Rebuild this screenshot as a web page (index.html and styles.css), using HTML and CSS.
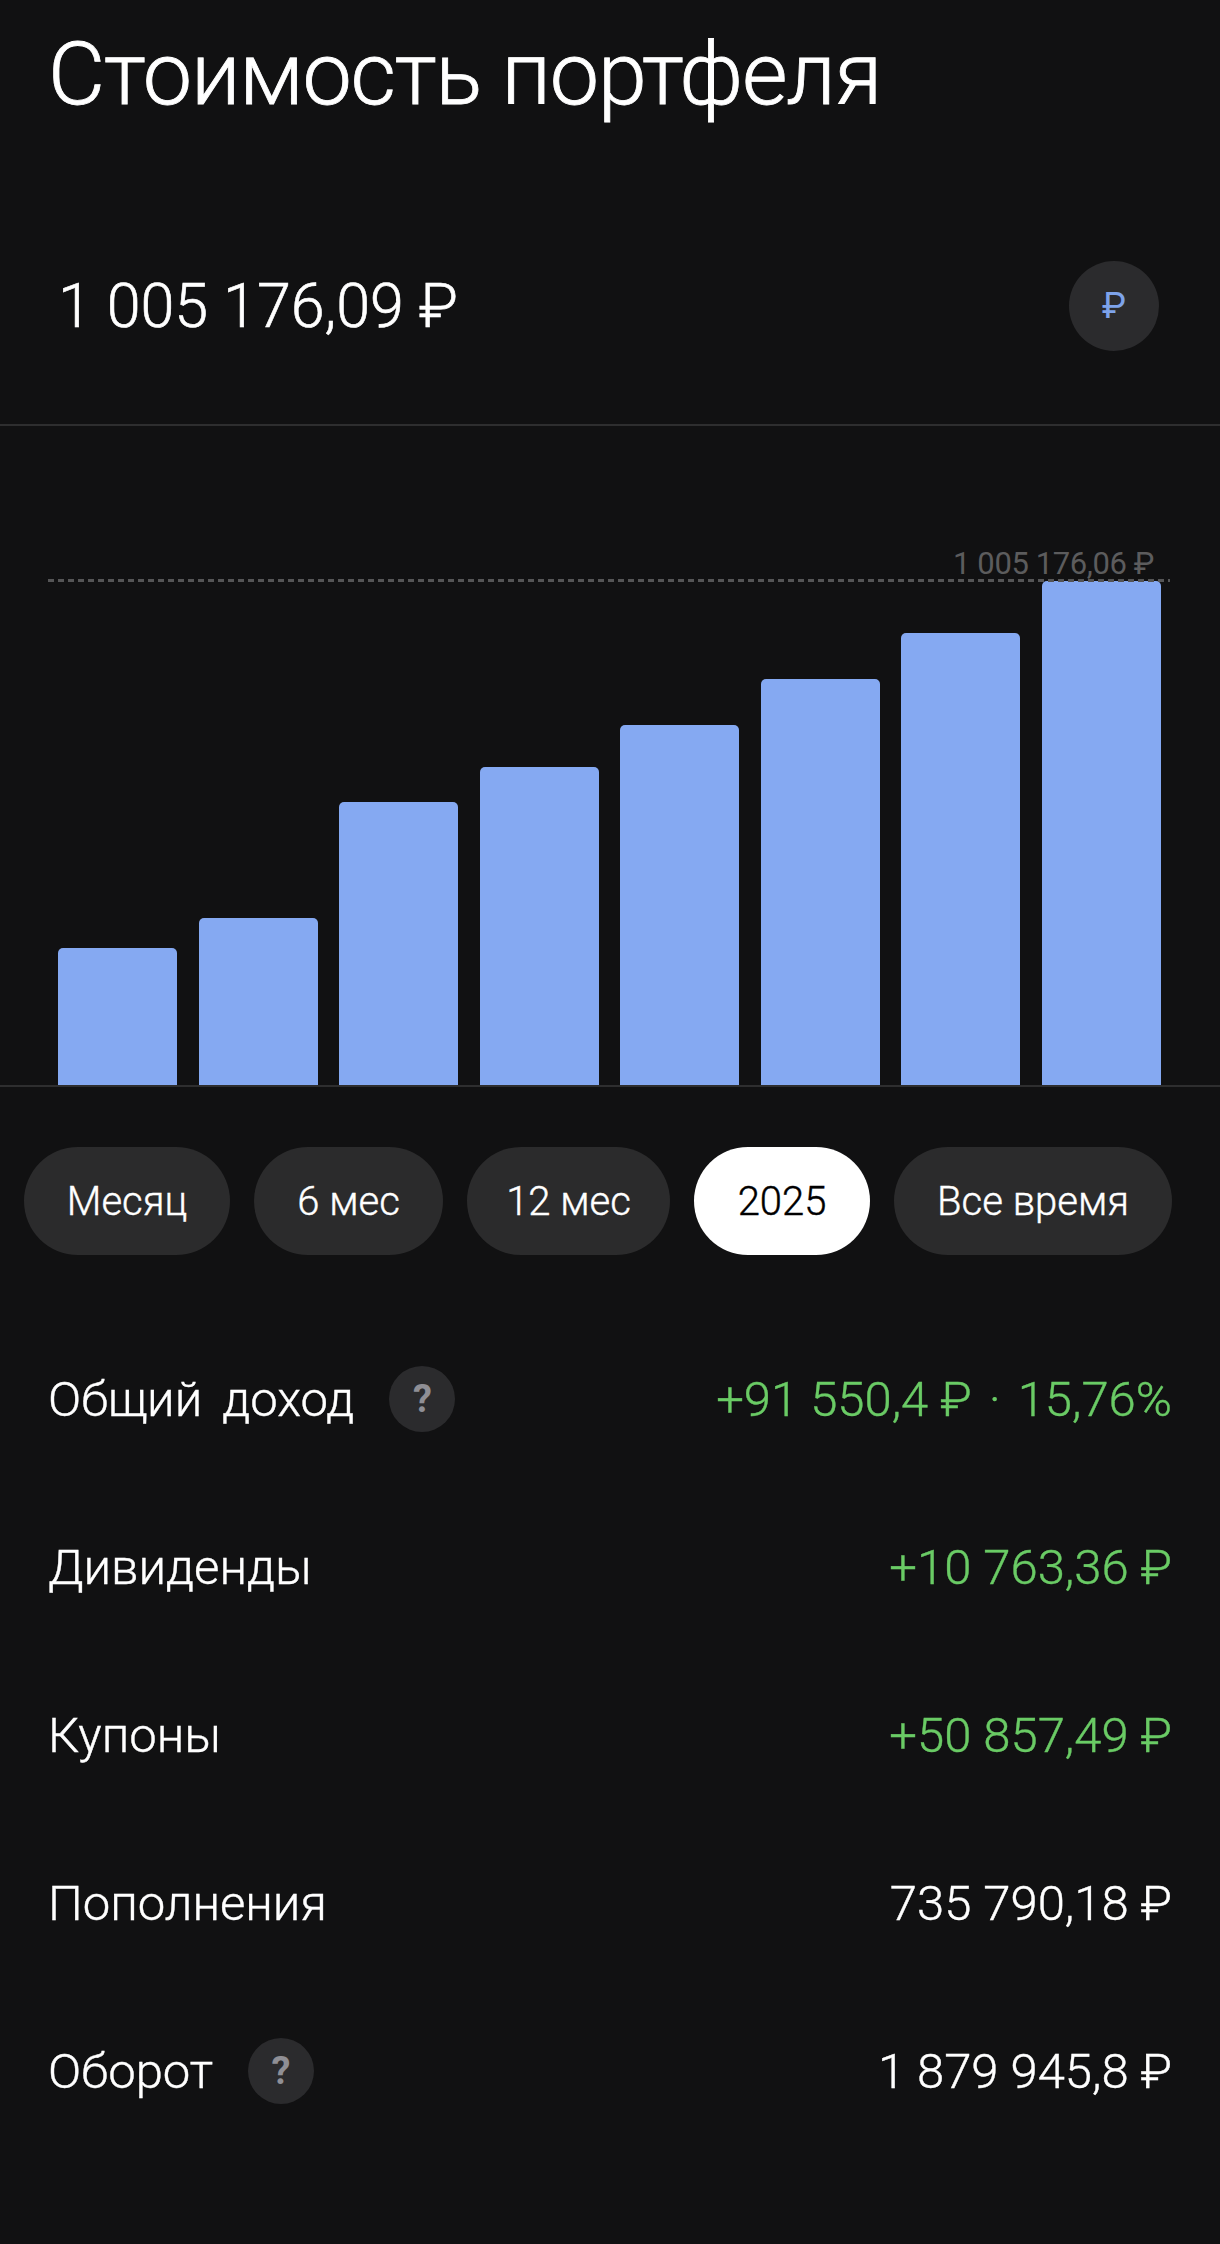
FILE: index.html

```html
<!DOCTYPE html>
<html lang="ru">
<head>
    <meta charset="UTF-8">
    <title>Стоимость портфеля</title>
    <link rel="stylesheet" href="styles.css">
</head>
<body>

<div class="container">

    <!-- Заголовок и сумма -->
    <div class="header">
        <h1 class="title">Стоимость портфеля</h1>
        <div class="value-row">
            <div class="value">1 005 176,09 ₽</div>
            <div class="currency">₽</div>
        </div>
    </div>

    <!-- График -->
    <div class="chart">
        <div class="max-label">1 005 176,06 ₽</div>
        <div class="max-line"></div>
        <div class="bar" style="height: 137px"></div>
        <div class="bar" style="height: 167px"></div>
        <div class="bar" style="height: 283px"></div>
        <div class="bar" style="height: 318px"></div>
        <div class="bar" style="height: 360px"></div>
        <div class="bar" style="height: 406px"></div>
        <div class="bar" style="height: 452px"></div>
        <div class="bar" style="height: 504px"></div>
    </div>

    <!-- Периоды -->
    <div class="periods">
        <div class="pill">Месяц</div>
        <div class="pill">6 мес</div>
        <div class="pill">12 мес</div>
        <div class="pill active">2025</div>
        <div class="pill">Все время</div>
    </div>

    <!-- Показатели -->
    <div class="rows">
        <div class="row">
            <div class="row-label">Общий доход <span class="help">?</span></div>
            <div class="row-value green">+91 550,4 ₽ <span class="dot">·</span> 15,76%</div>
        </div>
        <div class="row">
            <div class="row-label">Дивиденды</div>
            <div class="row-value green">+10 763,36 ₽</div>
        </div>
        <div class="row">
            <div class="row-label">Купоны</div>
            <div class="row-value green">+50 857,49 ₽</div>
        </div>
        <div class="row">
            <div class="row-label">Пополнения</div>
            <div class="row-value">735 790,18 ₽</div>
        </div>
        <div class="row">
            <div class="row-label">Оборот <span class="help">?</span></div>
            <div class="row-value">1 879 945,8 ₽</div>
        </div>
    </div>

</div>

</body>
</html>
```

FILE: styles.css

```css
html, body {
    margin: 0;
    padding: 0;
    background-color: #111112;
}
body {
    font-family: Roboto, "Noto Sans", sans-serif;
    font-weight: 300;
    color: #fff;
}
.container {
    width: 1220px;
    height: 2244px;
    overflow: hidden;
}
.header {
    height: 424px;
    border-bottom: 2px solid #2e2e2f;
}
.title {
    margin: 0;
    padding: 24px 0 0 48px;
    font-size: 88px;
    line-height: 100px;
    font-weight: 300;
    letter-spacing: -1.2px;
    -webkit-text-stroke: 0.8px #fff;
}
.value-row {
    display: flex;
    align-items: center;
    justify-content: space-between;
    margin-top: 137px;
    padding: 0 61px 0 58px;
}
.value {
    font-size: 61px;
    -webkit-text-stroke: 0.6px #fff;
}
.currency {
    width: 90px;
    height: 90px;
    border-radius: 50%;
    background: #2b2b2d;
    color: #7ea3ea;
    font-size: 36px;
    font-weight: 400;
    display: flex;
    align-items: center;
    justify-content: center;
}
.chart {
    position: relative;
    height: 659px;
    display: flex;
    align-items: flex-end;
    gap: 21.5px;
    padding: 0 59px 0 58px;
    border-bottom: 2px solid #2e2e2f;
}
.bar {
    flex: 1;
    background: #85a9f2;
    border-radius: 5px 5px 0 0;
}
.max-label {
    position: absolute;
    right: 66px;
    top: 120px;
    font-size: 31px;
    line-height: 36px;
    font-weight: 400;
    letter-spacing: -0.4px;
    color: #5c5c5d;
}
.max-line {
    position: absolute;
    left: 48px;
    right: 50px;
    top: 153px;
    height: 3px;
    background: repeating-linear-gradient(to right, #555556 0, #555556 6px, transparent 6px, transparent 10px);
}
.periods {
    display: grid;
    grid-template-columns: 206px 189px 203px 176px 278px;
    gap: 24px;
    margin-top: 60px;
    padding-left: 24px;
}
.pill {
    height: 108px;
    border-radius: 54px;
    background: #2b2b2c;
    font-size: 40px;
    display: flex;
    align-items: center;
    justify-content: center;
    -webkit-text-stroke: 0.4px #fff;
}
.pill.active {
    background: #fff;
    color: #000;
    -webkit-text-stroke: 0.4px #000;
}
.rows {
    margin-top: 60px;
}
.row {
    height: 168px;
    padding: 0 48px;
    display: flex;
    align-items: center;
    justify-content: space-between;
    font-size: 49px;
}
.row-label {
    display: flex;
    align-items: center;
    white-space: pre;
    word-spacing: 8px;
    -webkit-text-stroke: 0.4px #fff;
}
.row-value {
    -webkit-text-stroke: 0.4px #fff;
}
.help {
    width: 66px;
    height: 66px;
    margin-left: 15px;
    border-radius: 50%;
    background: #2b2b2d;
    color: #8f8f95;
    font-size: 38px;
    font-weight: 700;
    display: flex;
    align-items: center;
    justify-content: center;
    -webkit-text-stroke: 0;
}
.row-value.green {
    color: #6acb65;
    -webkit-text-stroke: 0.4px #6acb65;
}
.dot {
    margin: 0 5px;
}
```
